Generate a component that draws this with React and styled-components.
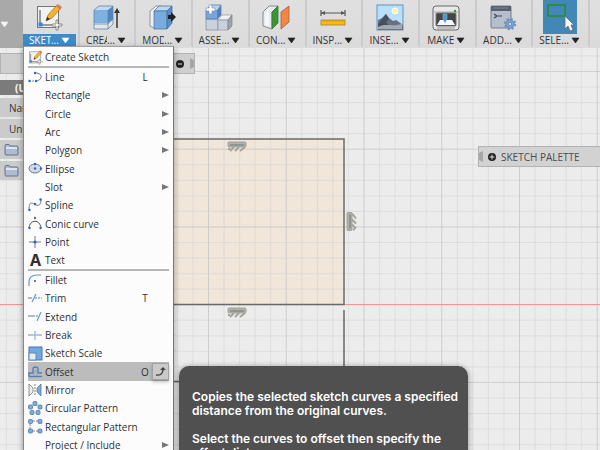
import React from "react";
import styled, { createGlobalStyle, css } from "styled-components";

const GlobalStyle = createGlobalStyle`
  * { box-sizing: border-box; }
  html, body { margin: 0; padding: 0; overflow: hidden; }
  body { font-family: "Open Sans", "Noto Sans", sans-serif; color: #3c3c3c; }
  button { font: inherit; color: inherit; border: 0; margin: 0; padding: 0; background: none; }
`;

const Page = styled.div`
  display: flex;
  flex-direction: column;
  height: 100vh;
  overflow: hidden;
  background: #ececec;
`;

/* ---------- Toolbar ---------- */

const Toolbar = styled.header`
  display: grid;
  grid-template-columns: 23px repeat(10, 1fr) 10px;
  flex: none;
  height: 48px;
  background: linear-gradient(#e0e0e0, #dadada);
`;

const WorkspaceButton = styled.button`
  display: flex;
  align-items: center;
  background: #a9a9a9;
`;

const Tool = styled.div`
  position: relative;
  display: flex;
  flex-direction: column;
  align-items: center;
  padding-right: 2px;
  border-right: 2px solid #cbcbcb;
  border-bottom: 2px solid #dcdcdc;
  min-width: 0;
`;

const ToolIcon = styled.button`
  display: flex;
  align-items: center;
  justify-content: center;
  width: 34px;
  height: 34px;
  background: ${(p) => (p.$selected ? "#4387b7" : "none")};
`;

const ToolLabel = styled.button`
  display: flex;
  align-items: center;
  justify-content: center;
  gap: 2px;
  width: 100%;
  height: 12px;
  font-size: 10px;
  line-height: 12px;
  font-weight: 500;
  white-space: nowrap;
  color: ${(p) => (p.$active ? "#ffffff" : "#333333")};
  background: ${(p) => (p.$active ? "#3d8bca" : "none")};
`;

const Word = styled.span`
  display: flex;
`;

const Clip = styled.span`
  overflow: hidden;
  ${(p) => p.$width && css`width: ${p.$width}px;`}
`;

/* ---------- Workspace ---------- */

const Workspace = styled.main`
  position: relative;
  flex: 1;
  min-height: 0;
`;

const Canvas = styled.svg`
  position: absolute;
  inset: 0;
  width: 100%;
  height: 100%;
`;

const Browser = styled.aside`
  position: relative;
  display: flex;
  flex-direction: column;
  width: 195px;
  padding-top: 5px;
`;

const BrowserHeader = styled.div`
  display: flex;
  align-items: center;
  justify-content: flex-end;
  gap: 6px;
  height: 21px;
  margin-bottom: 6px;
  border: 1px solid #b4b4b4;
  background: #cfcfcf;
`;

const BrowserRow = styled.div`
  display: flex;
  align-items: center;
  width: 150px;
  height: ${(p) => (p.$root ? 15 : 19)}px;
  margin-bottom: ${(p) => (p.$root ? 3 : 2)}px;
  padding-left: ${(p) => (p.$indent ? 9 : 4)}px;
  font-size: 10px;
  line-height: 14px;
  color: ${(p) => (p.$root ? "#ffffff" : "#333333")};
  font-weight: ${(p) => (p.$root ? 700 : 500)};
  background: ${(p) => (p.$root ? "#7b7b7b" : "#cbcbcb")};
`;

const RootName = styled.span`
  padding-left: 11px;
`;

/* ---------- Menu ---------- */

const Menu = styled.nav`
  position: absolute;
  top: -2px;
  left: 23px;
  width: 151px;
  padding: 1px 4px;
  border: 1px solid #a0a0a0;
  border-left-color: #888888;
  border-right-color: #777777;
  background: #fcfcfc;
  box-shadow: 0 2px 6px rgba(0, 0, 0, 0.35);
`;

const MenuGroup = styled.div`
  display: flex;
  flex-direction: column;

  & + & {
    border-top: 2px solid #b6b6b6;
  }
`;

const MenuItem = styled.button`
  display: grid;
  grid-template-columns: 17px 1fr 14px 17px;
  align-items: center;
  height: 18px;
  text-align: left;
  font-size: 10px;
  font-weight: 500;
  line-height: 16px;
  white-space: nowrap;
  color: #303030;
  background: ${(p) => (p.$active ? "#bcbcbc" : "none")};

  &:nth-child(3n) {
    height: 19px;
  }
`;

const IconSlot = styled.span`
  display: flex;
  justify-content: center;
  width: 15px;
`;

const Name = styled.span`
  min-width: 0;
`;

const Shortcut = styled.kbd`
  font: inherit;
  text-align: center;
`;

const Tail = styled.span`
  display: flex;
  align-items: center;
  justify-content: flex-end;
  height: 17px;
  ${(p) => p.$boxed && css`
    justify-content: center;
    border: 1px solid #a2a2a2;
    background: #cacaca;
    box-shadow: 0 2px 3px rgba(0, 0, 0, 0.25);
  `}
`;

/* ---------- Overlays ---------- */

const Palette = styled.section`
  position: absolute;
  top: 98px;
  right: 0;
  display: flex;
  align-items: center;
  gap: 5px;
  width: 122px;
  height: 21px;
  border: 1px solid #b2b2b2;
  border-right: 0;
  background: #d2d2d2;
  font-size: 10px;
  line-height: 14px;
  color: #4c4c4c;
  white-space: nowrap;
`;

const Tooltip = styled.div`
  position: absolute;
  top: 318px;
  left: 179px;
  width: 289px;
  padding: 24px 6px 24px 13px;
  border-radius: 10px;
  background: #505050;
  box-shadow: 0 1px 6px rgba(0, 0, 0, 0.4);
  font-family: Inter, "Liberation Sans", sans-serif;
  font-size: 12px;
  font-weight: 600;
  line-height: 14px;
  color: #ffffff;
`;

const Para = styled.p`
  margin: 0 0 14px;
`;

/* ---------- Toolbar drawings ---------- */

const Down = ({ color = "#222" }) => (
  <svg width="9" height="7" viewBox="0 0 9 7"><path d="M1 1h7L4.5 6z" fill={color} stroke={color} strokeWidth=".6" /></svg>
);

const SketchArt = () => (
  <>
    <rect x="2.5" y="3.5" width="21" height="21" fill="#f2f2f2" stroke="#777" />
    <path d="M5 7v15h15" fill="none" stroke="#444" />
    <rect x="3.5" y="19.5" width="4" height="4" fill="#3382dc" />
    <path d="M11 18l2-6 9-10 4 3-9 10z" fill="#f4b52d" stroke="#9b671e" strokeWidth=".7" />
    <path d="M21 3l2-2 4 3-2 3z" fill="#d77b72" />
    <path d="M11 18l1-4 3 2z" fill="#333" />
    <path d="M21 17h2v4h4v2h-4v4h-2v-4h-4v-2h4z" fill="#f8f8f8" stroke="#777" strokeWidth=".8" />
  </>
);

const TOOL_ART = {
  sketch: <SketchArt />,
  create: (
    <>
      <path d="M2 7l5-4h14l-4 4z" fill="#c0dcf5" />
      <path d="M2 7h14v14H2z" fill="#7fb0e2" />
      <path d="M16 7l5-4v14l-5 4z" fill="#4e86c5" />
      <path d="M2 20h14l5-4v5l-5 5H2z" fill="#e3e7eb" />
      <path d="M2 7l5-4h14v18l-5 5H2zM2 21h14l5-5M16 7v19" fill="none" stroke="#67839d" strokeWidth=".8" />
      <path d="M25 25V8" stroke="#333" strokeWidth="1.5" /><path d="M22 10l3-5 3 5z" fill="#333" />
    </>
  ),
  modify: (
    <>
      <path d="M1 8l6-5h5L7 8v18l-6-3z" fill="#edf0f3" stroke="#7a838d" strokeWidth=".8" />
      <path d="M5 8l5-5h13l-5 5z" fill="#bad8f4" stroke="#55789c" strokeWidth=".8" />
      <path d="M5 8h13v18H5z" fill="#78abe0" stroke="#55789c" strokeWidth=".8" />
      <path d="M18 8l5-5v17l-5 6z" fill="#588fcb" stroke="#466f9a" strokeWidth=".8" />
      <path d="M19 12h3V9l5 5-5 5v-3h-3z" fill="#222" />
    </>
  ),
  assemble: (
    <>
      <path d="M1 7l5-5h10l-4 5z" fill="#b9d4f1" /><path d="M1 7h11v9H1z" fill="#76a5e0" /><path d="M12 7l4-5v10l-4 4z" fill="#527fbd" />
      <path d="M1 16h12v11H1z" fill="#cbd1dc" stroke="#7f8995" strokeWidth=".7" />
      <path d="M13 17l4-5h10l-4 5z" fill="#f1f2f4" stroke="#888" strokeWidth=".6" />
      <path d="M13 17h10v10H13z" fill="#cbd1dc" stroke="#858b95" strokeWidth=".6" />
      <path d="M23 17l4-5v11l-4 4z" fill="#99a4b2" stroke="#777" strokeWidth=".6" />
      <path d="M1 7l5-5h10v10l-4 4H1z" fill="none" stroke="#5e7da7" strokeWidth=".8" />
      <path d="M4 2h3v3h3v3H7v3H4V8H1V5h3z" fill="#fff" stroke="#78889e" strokeWidth=".6" />
    </>
  ),
  construct: (
    <>
      <path d="M1 9l6-6h9l-6 6v17l-9-3z" fill="#e6e9ee" stroke="#777" strokeWidth=".8" />
      <path d="M10 9l6-6v17l-6 6z" fill="#329a31" stroke="#477044" strokeWidth=".8" />
      <path d="M19 9l8-6v16l-8 7z" fill="#f28643" stroke="#996348" strokeWidth=".8" />
      <path d="M3 10l4-4v17l-4-1z" fill="#fff" opacity=".6" />
    </>
  ),
  inspect: (
    <>
      <path d="M2 10h24M2 7v6M26 7v6" stroke="#555" strokeWidth="1.2" />
      <path d="M2 10l4-2v4zM26 10l-4-2v4z" fill="#555" />
      <rect x="2" y="17" width="24" height="5" fill="#f5bb13" stroke="#a78229" strokeWidth=".8" />
      <path d="M5 17v2m3-2v2m3-2v2m3-2v2m3-2v2m3-2v2m3-2v2" stroke="#b78111" strokeWidth=".6" />
    </>
  ),
  insert: (
    <>
      <rect x="1" y="2" width="26" height="25" fill="#b9e0fa" stroke="#6193be" />
      <circle cx="19" cy="8" r="3" fill="#fff3a1" stroke="#fff" />
      <path d="M2 17l4-2 4-4 3 4 4 3 3-1 7 5v5H2z" fill="#69717e" />
      <path d="M10 11l3 5-3 3 6 7H2v-5z" fill="#46505f" /><path d="M2 24c8-4 14 0 24-3v5H2z" fill="#a1aab5" />
    </>
  ),
  make: (
    <>
      <rect x="1" y="3" width="26" height="24" rx="3" fill="#e9e9e9" stroke="#666" />
      <path d="M2 9h24" stroke="#aaa" /><rect x="4" y="10" width="20" height="13" rx="1" fill="#454545" stroke="#777" />
      <path d="M8 17h12l3 5H5z" fill="#f8f8f8" /><path d="M11 11h4v5l-2 4-2-4z" fill="#4a94cb" stroke="#8ec4e9" strokeWidth=".5" />
      <circle cx="23" cy="8" r="1.2" fill="#1aa044" /><path d="M5 25h18" stroke="#999" />
    </>
  ),
  addins: (
    <>
      <rect x="2" y="3" width="20" height="22" rx="1" fill="#b6bdcb" stroke="#77808f" />
      <path d="M2 3h20v5H2z" fill="#596170" /><path d="M4 5h15" stroke="#8c95a4" strokeWidth=".7" />
      <path d="M5 11l3 2-3 2M9 13h4" fill="none" stroke="#374357" strokeWidth="1.2" />
      <circle cx="21" cy="21" r="5.2" fill="none" stroke="#6f96c8" strokeWidth="2" strokeDasharray="2.2 1.88" />
      <circle cx="21" cy="21" r="4.2" fill="#7fa3cf" stroke="#5b82b4" strokeWidth=".8" />
      <circle cx="21" cy="21" r="1.6" fill="#dce5ef" stroke="#5077a8" strokeWidth=".7" />
    </>
  ),
  select: (
    <>
      <rect x="2" y="2" width="17" height="11" fill="none" stroke="#258e25" strokeWidth="1.5" />
      <path d="M19 13v13l3-3 2 5 3-1-2-5h3z" fill="#f7f7f7" stroke="#62758b" strokeWidth=".9" />
    </>
  ),
};

const TOOLS = [
  { id: "sketch", text: "SKET", clip: 22, dots: true, active: true },
  { id: "create", text: "CREA", clip: 21, dots: true },
  { id: "modify", text: "MOD", clip: 22, dots: true },
  { id: "assemble", text: "ASSE", dots: true },
  { id: "construct", text: "CON", dots: true },
  { id: "inspect", text: "INSP", dots: true },
  { id: "insert", text: "INSE", dots: true },
  { id: "make", text: "MAKE" },
  { id: "addins", text: "ADD", dots: true },
  { id: "select", text: "SELE", dots: true, selected: true },
];

/* ---------- Menu drawings ---------- */

const dot = (x, y, r = 1.2) => <circle cx={x} cy={y} r={r} fill="#2468c8" />;
const node = (x, y) => <rect x={x} y={y} width="4" height="4" rx="1" fill="#78afe5" stroke="#476e95" strokeWidth=".7" />;

const MENU_ART = {
  create: <g transform="scale(.53)"><SketchArt /></g>,
  line: <><path d="M1 11h8" stroke="#888" strokeDasharray="2 1" /><path d="M7 3h2q5 1 4 5-1 2-4 3" fill="none" stroke="#666" strokeWidth=".9" />{dot(1.5, 11)}{dot(8, 11)}{dot(7, 3)}</>,
  ellipse: <><ellipse cx="7" cy="7.5" rx="6" ry="4.5" fill="#d3dae4" stroke="#777" />{dot(7, 3)}{dot(7, 7.5)}{dot(13, 7.5)}</>,
  spline: <><path d="M1 12C1 1 5 6 8 7s5 0 5-6" fill="none" stroke="#777" />{dot(1.5, 12)}{dot(7, 6)}{dot(12.5, 1.5)}</>,
  conic: <><path d="M1 12C2 3 12 3 13 12" fill="none" stroke="#555" />{dot(1.5, 12)}{dot(12.5, 12)}<circle cx="7" cy="2" r="1.2" fill="#666" /></>,
  point: <><path d="M1 7h12M7 1v12" stroke="#777" />{dot(7, 7, 1.6)}</>,
  fillet: <><path d="M1 13V9" stroke="#777" /><path d="M1 9q0-7 8-7" fill="none" stroke="#57a0e8" strokeWidth="1.2" /><path d="M9 2h4" stroke="#888" /><circle cx="7" cy="8" r="1" fill="#555" /></>,
  trim: <><path d="M0 7h4" stroke="#777" /><path d="M4 11L8 3" stroke="#5d9ce2" strokeWidth="1.2" /><path d="M7 7h7" stroke="#4487d5" strokeDasharray="2 1" /></>,
  extend: <><path d="M0 7h5" stroke="#777" /><path d="M5 7h6" stroke="#4487d5" strokeDasharray="2 1" /><path d="M9 12l4-9" stroke="#5d9ce2" strokeWidth="1.2" /></>,
  break: <><path d="M0 7h5M9 7h5" stroke="#888" /><path d="M7 3v9" stroke="#5eabef" /><path d="M5 7h4" stroke="#75aee6" /></>,
  scale: <><rect x="1" y="1" width="13" height="13" fill="#71a9df" stroke="#4677ab" /><rect x="1" y="7" width="7" height="7" fill="#e7edf4" stroke="#6689ad" /></>,
  offset: <><path d="M1 12.5h13" stroke="#4f7fb9" strokeWidth="1.4" /><path d="M1 12.5V9h4V5q0-2 2.500-2T10 5v4h4" fill="none" stroke="#4f7fb9" strokeWidth="1.4" /><path d="M6 12V7h3v5" fill="none" stroke="#8d9cab" strokeWidth=".8" /></>,
  mirror: <><path d="M1 1l4 4v4l-4 4z" fill="#eee" stroke="#777" strokeWidth=".8" /><path d="M13 1L9 5v4l4 4z" fill="#76ade1" stroke="#58789a" strokeWidth=".8" /><path d="M7 1v12" stroke="#888" strokeDasharray="2 1" /></>,
  circular: <>{node(5, 0.5)}{node(0.5, 4)}{node(10, 4)}{node(2, 9.5)}{node(8, 9.5)}</>,
  rectangular: <><path d="M2 2h10M2 2v10M2 12h10" fill="none" stroke="#888" strokeDasharray="2 1" />{node(0.5, 0.5)}{node(10, 0.5)}{node(0.5, 10)}{node(10, 10)}</>,
};

const BigLetter = styled.span`
  font-family: "Noto Sans", sans-serif;
  font-size: 16px;
  line-height: 16px;
  font-weight: 700;
`;

const MENU = [
  [{ name: "Create Sketch", icon: "create" }],
  [
    { name: "Line", icon: "line", key: "L" },
    { name: "Rectangle", sub: true },
    { name: "Circle", sub: true },
    { name: "Arc", sub: true },
    { name: "Polygon", sub: true },
    { name: "Ellipse", icon: "ellipse" },
    { name: "Slot", sub: true },
    { name: "Spline", icon: "spline" },
    { name: "Conic curve", icon: "conic" },
    { name: "Point", icon: "point" },
    { name: "Text", letter: "A" },
  ],
  [
    { name: "Fillet", icon: "fillet" },
    { name: "Trim", icon: "trim", key: "T" },
    { name: "Extend", icon: "extend" },
    { name: "Break", icon: "break" },
    { name: "Sketch Scale", icon: "scale" },
    { name: "Offset", icon: "offset", key: "O", active: true },
    { name: "Mirror", icon: "mirror" },
    { name: "Circular Pattern", icon: "circular" },
    { name: "Rectangular Pattern", icon: "rectangular" },
    { name: "Project / Include", sub: true },
  ],
];

/* ---------- Canvas drawing ---------- */

const STEP = 15.55;
const lines = Array.from({ length: 130 }, (_, i) => i - 13);

const Constraint = ({ x, y, turn = 0 }) => (
  <g transform={`translate(${x} ${y}) rotate(${turn})`} stroke="#a3a39e" fill="none">
    <rect x="-9" y="-5" width="18" height="5" rx="1" fill="#b1b1ab" />
    <path d="M-7-2H7" stroke="#777772" />
    <path d="M-7 4l4-4M-2 4l4-4M3 4l5-4M-8 1v2" strokeWidth="2" />
  </g>
);

const SketchCanvas = () => (
  <Canvas aria-label="Sketch canvas">
    <rect x="100" y="91" width="244" height="165" fill="#f0e6da" />
    {lines.map((n) => (
      <g key={n} stroke={n % 5 === 0 ? "#c4c4c4" : "#d4d4d4"} strokeOpacity={n % 5 === 0 ? 0.75 : 0.55}>
        <line x1={208.5 + n * STEP} x2={208.5 + n * STEP} y1="0" y2="100%" />
        <line x1="0" x2="100%" y1={101.2 + n * STEP} y2={101.2 + n * STEP} />
      </g>
    ))}
    <path d="M0 256.500H4000" stroke="#ef9696" />
    <path d="M100 91H344V256.500H100" fill="none" stroke="#6b6965" strokeWidth="1.5" />
    <path d="M344 262V333.500H100" fill="none" stroke="#666" strokeWidth="1.5" />
    <Constraint x={237} y={99} />
    <Constraint x={237} y={265} />
    <Constraint x={352} y={173.5} turn={-90} />
  </Canvas>
);

const Folder = () => (
  <svg width="15" height="13" viewBox="0 0 15 13"><path d="M1 2.500q0-1 1-1h3l1 1.500h7q1 0 1 1V11q0 1-1 1H2q-1 0-1-1z" fill="#aebbd0" stroke="#65758c" /><path d="M2 5h11" stroke="#edf2f8" strokeWidth="1.5" /></svg>
);

const Grip = ({ flip }) => (
  <svg width="4" height="11" viewBox="0 0 4 11"><path d={flip ? "M0 0l4 2v7l-4 2z" : "M0 2l4-2v11L0 9z"} fill="#a6a6a6" /></svg>
);

const Badge = ({ plus }) => (
  <svg width="8" height="8" viewBox="0 0 8 8"><circle cx="4" cy="4" r="4" fill="#222" /><path d={plus ? "M1.5 4h5M4 1.5v5" : "M2 4h4"} stroke="#ddd" /></svg>
);

const Entry = ({ item }) => (
  <MenuItem type="button" $active={item.active}>
    <IconSlot>
      {item.icon && <svg width="15" height="15" viewBox="0 0 15 15">{MENU_ART[item.icon]}</svg>}
      {item.letter && <BigLetter aria-hidden="true">{item.letter}</BigLetter>}
    </IconSlot>
    <Name>{item.name}</Name>
    {item.key ? <Shortcut>{item.key}</Shortcut> : <span />}
    <Tail $boxed={item.active}>
      {item.sub && <svg width="7" height="8" viewBox="0 0 7 8"><path d="M0 1l7 3-7 3z" fill="#777" /></svg>}
      {item.active && <svg width="11" height="11" viewBox="0 0 11 11"><path d="M1 9q7 1 7-6" fill="none" stroke="#444" strokeWidth="1.5" /><path d="M5 4l3-3 3 3z" fill="#444" /></svg>}
    </Tail>
  </MenuItem>
);

export default function App() {
  return (
    <Page>
      <GlobalStyle />
      <Toolbar>
        <WorkspaceButton type="button" aria-label="Workspace"><Down color="#f5f5f5" /></WorkspaceButton>
        {TOOLS.map((t) => (
          <Tool key={t.id}>
            <ToolIcon type="button" aria-label={t.id} $selected={t.selected}>
              <svg width="28" height="29" viewBox="0 0 28 29">{TOOL_ART[t.id]}</svg>
            </ToolIcon>
            <ToolLabel type="button" $active={t.active}>
              <Word><Clip $width={t.clip}>{t.text}</Clip>{t.dots && <span>...</span>}</Word>
              <Down color={t.active ? "#fff" : "#222"} />
            </ToolLabel>
          </Tool>
        ))}
      </Toolbar>
      <Workspace>
        <SketchCanvas />
        <Browser>
          <BrowserHeader><Badge /><Grip flip /></BrowserHeader>
          <BrowserRow $root><RootName>(U</RootName></BrowserRow>
          <BrowserRow $indent>Nan</BrowserRow>
          <BrowserRow $indent>Uni</BrowserRow>
          <BrowserRow><Folder /></BrowserRow>
          <BrowserRow><Folder /></BrowserRow>
        </Browser>
        <Palette><Grip /><Badge plus />SKETCH PALETTE</Palette>
        <Menu aria-label="Sketch">
          {MENU.map((group) => (
            <MenuGroup key={group[0].name}>
              {group.map((item) => <Entry key={item.name} item={item} />)}
            </MenuGroup>
          ))}
        </Menu>
        <Tooltip role="tooltip">
          <Para>Copies the selected sketch curves a specified distance from the original curves.</Para>
          <Para>Select the curves to offset then specify the offset distance.</Para>
        </Tooltip>
      </Workspace>
    </Page>
  );
}
